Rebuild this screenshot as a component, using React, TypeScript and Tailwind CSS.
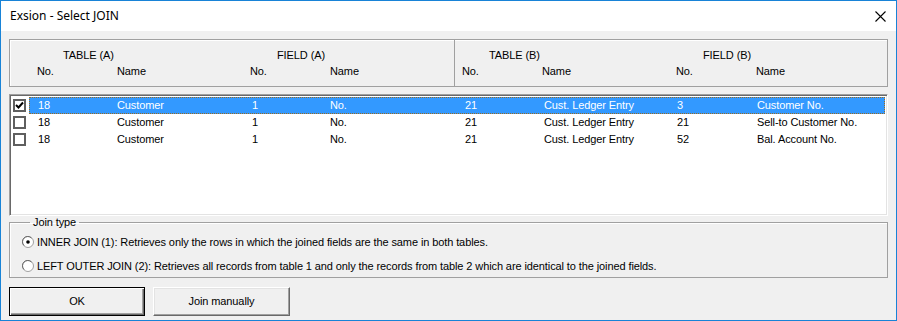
import React from 'react';

const rows = [
  { checked: true, ta: '18', tname: 'Customer', fa: '1', fname: 'No.', tb: '21', tbname: 'Cust. Ledger Entry', fb: '3', fbname: 'Customer No.' },
  { checked: false, ta: '18', tname: 'Customer', fa: '1', fname: 'No.', tb: '21', tbname: 'Cust. Ledger Entry', fb: '21', fbname: 'Sell-to Customer No.' },
  { checked: false, ta: '18', tname: 'Customer', fa: '1', fname: 'No.', tb: '21', tbname: 'Cust. Ledger Entry', fb: '52', fbname: 'Bal. Account No.' },
];

const CheckBox = ({ checked }: { checked: boolean }) => (
  <div className="w-[13px] h-[13px] border-2 border-[#5f5f5f] bg-white flex items-center justify-center">
    {checked && (
      <svg width="9" height="9" viewBox="0 0 9 9">
        <path d="M1 4 L3.5 6.5 L8 1.5" stroke="#000" strokeWidth="2" fill="none" />
      </svg>
    )}
  </div>
);

const Radio = ({ checked }: { checked: boolean }) => (
  <svg width="12" height="12" viewBox="0 0 12 12" className="shrink-0">
    <circle cx="6" cy="6" r="5.5" fill="#fff" stroke="#a0a0a0" />
    <path d="M2 9.5 A5 5 0 0 1 9.5 2" stroke="#696969" fill="none" />
    {checked && <circle cx="6" cy="6" r="1.8" fill="#000" />}
  </svg>
);

const App: React.FC = () => {
  return (
    <div
      className="w-[897px] h-[321px] border border-[#1883d7] bg-[#f0f0f0] flex flex-col text-[11px] tracking-[-0.1px] text-black overflow-hidden"
      style={{ fontFamily: '"Liberation Sans", Arial, sans-serif' }}
    >
      {/* title bar */}
      <div className="h-[30px] bg-white flex items-center justify-between pl-[9px] pr-[10px] shrink-0">
        <span className="text-[12px] tracking-normal" style={{ fontFamily: '"Noto Sans", sans-serif' }}>Exsion - Select JOIN</span>
        <svg width="11" height="11" viewBox="0 0 11 11">
          <path d="M0.5 0.5 L10.5 10.5 M10.5 0.5 L0.5 10.5" stroke="#000" strokeWidth="1.1" />
        </svg>
      </div>

      <div className="flex flex-col px-[8px] pt-[8px]">
        {/* column header */}
        <div className="h-[48px] border border-[#a0a0a0] shadow-[inset_1px_1px_0_#fff] flex">
          <div className="w-[445px] border-r border-[#a0a0a0] pl-[27px] pt-[9px] flex">
            <div className="w-[213px] flex flex-col">
              <div className="pl-[26px] leading-[13px]">TABLE (A)</div>
              <div className="flex mt-[3px] leading-[13px]">
                <div className="w-[80px]">No.</div>
                <div>Name</div>
              </div>
            </div>
            <div className="flex flex-col">
              <div className="pl-[27px] leading-[13px]">FIELD (A)</div>
              <div className="flex mt-[3px] leading-[13px]">
                <div className="w-[80px]">No.</div>
                <div>Name</div>
              </div>
            </div>
          </div>
          <div className="flex-1 pl-[7px] pt-[9px] flex">
            <div className="w-[214px] flex flex-col">
              <div className="pl-[27px] leading-[13px]">TABLE (B)</div>
              <div className="flex mt-[3px] leading-[13px]">
                <div className="w-[80px]">No.</div>
                <div>Name</div>
              </div>
            </div>
            <div className="flex flex-col">
              <div className="pl-[27px] leading-[13px]">FIELD (B)</div>
              <div className="flex mt-[3px] leading-[13px]">
                <div className="w-[80px]">No.</div>
                <div>Name</div>
              </div>
            </div>
          </div>
        </div>

        {/* list */}
        <div className="mt-[7px] h-[122px] bg-white border border-t-[#a0a0a0] border-l-[#a0a0a0] border-b-white border-r-white shadow-[inset_1px_1px_0_#696969,inset_-1px_-1px_0_#e3e3e3] p-[1px] pt-[2px]">
          {rows.map((r, i) => (
            <div key={i} className="h-[17px] flex items-center">
              <div className="w-[18px] pl-[2px] flex items-center">
                <CheckBox checked={r.checked} />
              </div>
              <div
                className={
                  r.checked
                    ? 'flex-1 h-full flex items-center pl-[8px] bg-[#3399ff] text-white border border-dotted border-[#9a6a20] mr-[1px]'
                    : 'flex-1 h-full flex items-center pl-[9px]'
                }
              >
                <div className="w-[79px]">{r.ta}</div>
                <div className="w-[135px]">{r.tname}</div>
                <div className="w-[78px]">{r.fa}</div>
                <div className="w-[135px]">{r.fname}</div>
                <div className="w-[79px]">{r.tb}</div>
                <div className="w-[133px]">{r.tbname}</div>
                <div className="w-[80px]">{r.fb}</div>
                <div>{r.fbname}</div>
              </div>
            </div>
          ))}
        </div>

        {/* join type */}
        <fieldset className="h-[62px] border border-[#a0a0a0] shadow-[inset_1px_1px_0_#fff] pl-[12px]">
          <legend className="ml-[8px] px-[3px] leading-[13px]">Join type</legend>
          <div className="flex items-center gap-[3px] mt-[6px] h-[14px]">
            <Radio checked={true} />
            <span>INNER JOIN (1): Retrieves only the rows in which the joined fields are the same in both tables.</span>
          </div>
          <div className="flex items-center gap-[3px] mt-[10px] h-[14px]">
            <Radio checked={false} />
            <span>LEFT OUTER JOIN (2): Retrieves all records from table 1 and only the records from table 2 which are identical to the joined fields.</span>
          </div>
        </fieldset>

        {/* buttons */}
        <div className="flex gap-[8px] mt-[9px]">
          <button className="w-[136px] h-[29px] border border-black bg-[#f0f0f0] shadow-[inset_1px_1px_0_#fff,inset_-1px_-1px_0_#696969,inset_-2px_-2px_0_#a0a0a0]">
            OK
          </button>
          <button className="w-[137px] h-[29px] bg-[#f0f0f0] border border-t-white border-l-white border-b-[#696969] border-r-[#696969] shadow-[inset_-1px_-1px_0_#a0a0a0,inset_1px_1px_0_#e3e3e3]">
            Join manually
          </button>
        </div>
      </div>
    </div>
  );
};

export default App;
